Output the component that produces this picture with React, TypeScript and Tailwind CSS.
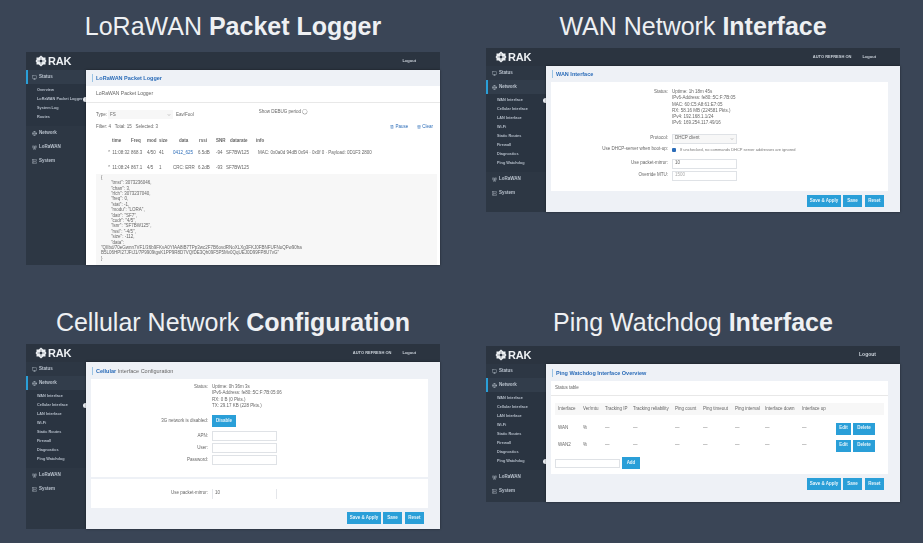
import { Monitor, Globe, RadioTower, Server, Pause, Trash2, ChevronDown } from 'lucide-react';
import type { ReactNode } from 'react';

const statusSubs = ['Overview', 'LoRaWAN Packet Logger', 'System Log', 'Routes'];
const networkSubs = ['WAN Interface', 'Cellular Interface', 'LAN Interface', 'Wi-Fi', 'Static Routes', 'Firewall', 'Diagnostics', 'Ping Watchdog'];

function Logo() {
  return (
    <div className="flex items-center gap-[1px] text-[#eef1f4]">
      <svg width="12" height="12" viewBox="0 0 24 24" fill="currentColor">
        <path d="M12 1l4.500 4h4.500v4.500l2 2.500-2 2.500V19h-4.500L12 23l-4.500-4H3v-4.500L1 12l2-2.500V5h4.500z" />
        <circle cx="12" cy="12" r="3" fill="#2b3440" />
        <path d="M12 5v3M12 16v3M5 12h3M16 12h3" stroke="#2b3440" strokeWidth="1" />
      </svg>
      <span className="text-[11px] font-bold leading-none tracking-[-0.2px]">RAK</span>
    </div>
  );
}

function NavItem({ icon, label, active }: { icon: ReactNode; label: string; active?: boolean }) {
  return (
    <div className={`relative flex h-[14px] items-center gap-[2px] pl-[6px] text-[4.5px] font-bold text-[#b9c2cd] ${active ? 'bg-[#323d4b]' : ''}`}>
      {active && <div className="absolute top-0 left-0 h-full w-[2px] bg-[#2a9fd8]" />}
      {icon}
      <span>{label}</span>
    </div>
  );
}

function Sidebar({ open, active }: { open: 'Status' | 'Network'; active: string }) {
  const subs = open === 'Status' ? statusSubs : networkSubs;
  const list = (
    <div className="flex flex-col bg-[#2a3441] pt-[2px] pb-[4px]">
      {subs.map((s) => (
        <div key={s} className="relative flex h-[9px] items-center whitespace-nowrap pl-[11px] text-[3.800px] font-bold text-[#b4bdc9]">
          {s}
          {s === active && <div className="absolute top-[2px] right-[-2px] size-[5px] rounded-full bg-[#eef1f6]" />}
        </div>
      ))}
    </div>
  );
  return (
    <div className="flex w-[60px] shrink-0 flex-col bg-[#2d3744]">
      <NavItem icon={<Monitor size={5} />} label="Status" active={open === 'Status'} />
      {open === 'Status' && list}
      <NavItem icon={<Globe size={5} />} label="Network" active={open === 'Network'} />
      {open === 'Network' && list}
      <NavItem icon={<RadioTower size={5} />} label="LoRaWAN" />
      <NavItem icon={<Server size={5} />} label="System" />
    </div>
  );
}

function Panel({ open, active, refresh, logoutOnly, children }: { open: 'Status' | 'Network'; active: string; refresh?: boolean; logoutOnly?: boolean; children: ReactNode }) {
  return (
    <div className="flex flex-col blur-[0.5px]">
      <div className="flex h-[18px] items-center justify-between bg-[#2b3440] pr-[24px] pl-[9px]">
        <Logo />
        <div className={`flex gap-[11px] font-bold text-[#c9d0d8] ${logoutOnly ? 'text-[5px]' : 'text-[4px]'}`}>
          {refresh && <span>AUTO REFRESH ON</span>}
          <span>Logout</span>
        </div>
      </div>
      <div className="flex">
        <Sidebar open={open} active={active} />
        <div className="relative min-w-0 flex-1 bg-[#eef1f6] shadow-[0_0_2px_rgba(0,0,0,0.5)]">{children}</div>
      </div>
    </div>
  );
}

function Heading({ children }: { children: ReactNode }) {
  return (
    <div className="flex h-[16px] items-center pl-[1px]">
      <div className="border-l border-[#9cc4e4] pl-[3px] text-[5.500px] font-bold text-[#2b6cb8]">{children}</div>
    </div>
  );
}

function Row({ label, children, className }: { label: string; children: ReactNode; className?: string }) {
  return (
    <div className={`flex items-center gap-[4px] text-[4.500px] text-[#666] ${className ?? ''}`}>
      <div className="w-[117px] shrink-0 text-right">{label}</div>
      {children}
    </div>
  );
}

function Input({ value, gray }: { value?: string; gray?: boolean }) {
  return (
    <div className={`flex h-[10px] w-[65px] items-center border border-[#dfe2e6] bg-white pl-[2px] text-[4.500px] ${gray ? 'text-[#aaa]' : 'text-[#666]'}`}>{value}</div>
  );
}

function Btn({ children, className }: { children: ReactNode; className?: string }) {
  return <div className={`flex h-[12px] items-center justify-center bg-[#2a9fd8] text-[4.500px] font-bold text-[#e6f4fb] ${className ?? ''}`}>{children}</div>;
}

function Actions() {
  return (
    <div className="flex justify-end gap-[2px] pr-[4px]">
      <Btn className="w-[34px]">Save & Apply</Btn>
      <Btn className="w-[19px]">Save</Btn>
      <Btn className="ml-[1px] w-[19px]">Reset</Btn>
    </div>
  );
}

function Lines({ lines }: { lines: string[] }) {
  return (
    <div className="flex flex-col text-[4.500px] leading-[6.300px] text-[#666]">
      {lines.map((l) => (
        <div key={l} className="whitespace-nowrap">{l}</div>
      ))}
    </div>
  );
}

const jsonLines = ['"tmst": 3073236046,', '"chan": 3,', '"rfch": 3073237040,', '"freq": 0,', '"stat": -1,', '"modu": "LORA",', '"datr": "SF7",', '"codr": "4/5",', '"lsnr": "SF7BW125",', '"rssi": "-4/5",', '"size": -112,', '"data":'];

const logWidths = ['w-[24px]', 'w-[16px]', 'w-[12px]', 'w-[14px]', 'w-[25px]', 'w-[18px]', 'w-[10px]', 'w-[32px]'];

function LogRow({ cells, link, className }: { cells: string[]; link?: boolean; className: string }) {
  return (
    <div className={`flex whitespace-nowrap pl-[11px] ${className}`}>
      {cells.map((c, i) => (
        <span key={i} className={`${logWidths[i] ?? ''} ${link && i === 4 ? 'text-[#2b6cb8]' : ''}`}>{c}</span>
      ))}
    </div>
  );
}

function LoggerPanel() {
  return (
    <Panel open="Status" active="LoRaWAN Packet Logger">
      <div className="h-[195px]">
        <div className="pl-[5px]"><Heading>LoRaWAN Packet Logger</Heading></div>
        <div className="flex h-[17px] items-center border-b border-[#e8e8e8] bg-white pl-[10px] text-[5px] text-[#666]">LoRaWAN Packet Logger</div>
        <div className="flex h-[162px] flex-col bg-white pl-[10px] text-[4.500px] text-[#666]">
          <div className="flex items-center pt-[6px]">
            <span className="mr-[1px]">Type:</span>
            <div className="flex h-[9px] w-[65px] items-center justify-between bg-[#f7f7f7] px-[2px]">FS<ChevronDown size={4} /></div>
            <span className="ml-[3px]">Eav/Fool</span>
            <span className="mb-[5px] ml-[65px]">Show DEBUG period ◯</span>
          </div>
          <div className="flex items-center justify-between pt-[3px] pr-[7px]">
            <span>Filter: 4 &nbsp; Total: 15 &nbsp; Selected: 3</span>
            <div className="flex gap-[9px] text-[#2b6cb8]">
              <span className="flex items-center gap-[1px]"><Pause size={4} />Pause</span>
              <span className="flex items-center gap-[1px]"><Trash2 size={4} />Clear</span>
            </div>
          </div>
          <div className="flex pt-[7px] pl-[16px] font-bold">
            <span className="w-[19px]">time</span><span className="w-[16px]">Freq</span><span className="w-[12px]">mod</span><span className="w-[20px]">size</span><span className="w-[20px]">data</span><span className="w-[17px]">rssi</span><span className="w-[14px]">SNR</span><span className="w-[26px]">datarate</span><span>info</span>
          </div>
          <LogRow link className="pt-[6px]" cells={['⌃ 11:08:32', '868.3', '4/50', '41', '0412_625', '6.5dB', '-94', 'SF7BW125', 'MAC: 0x0a0d 94dB 0x94 · 0x0f 0  ·  Payload: 0D1F3 2800']} />
          <LogRow className="pt-[8px]" cells={['⌃ 11:08:24', '867.1', '4/5', '1', 'CRC: ERR', '6.2dB', '-93', 'SF7BW125']} />
          <div className="mt-[2px] mr-[3px] flex-1 bg-[#f7f7f7] pt-[1px] pl-[5px] leading-[5.400px]">
            <div>{'{'}</div>
            <div className="pl-[10px]">
              {jsonLines.map((l) => <div key={l}>{l}</div>)}
            </div>
            <div className="whitespace-nowrap">"QIIbd/70eGwnn7VF1/36b9FKvA0YfAA8iB7TPp3wc2F7B6ovdRNoXLXg3FKJ0FBNFUFNoQFw90ha</div>
            <div className="whitespace-nowrap">B5L06HPI27JFtJ1/7P9909tgsK1PP9R8D7VQfDE3Qh09F5P5Mv0QqUEJ0D99FP8U7vG"</div>
            <div>{'}'}</div>
          </div>
        </div>
      </div>
    </Panel>
  );
}

function WanPanel() {
  return (
    <Panel open="Network" active="WAN Interface" refresh>
      <div className="pr-[12px] pb-[5px] pl-[5px]">
        <Heading>WAN Interface</Heading>
        <div className="h-[109px] bg-white pt-[7px]">
          <Row label="Status:" className="items-start">
            <Lines lines={['Uptime: 1h 18m 45s', 'IPv6-Address: fe80::5C:F:7B:05', 'MAC: 60:C5:A8:61:E7:05', 'RX: 58.16 MB (224581 Pkts.)', 'IPv4: 192.168.1.1/24', 'IPv6: 169.254.117.49/16']} />
          </Row>
          <Row label="Protocol:" className="mt-[7px]">
            <div className="flex h-[10px] w-[65px] items-center justify-between border border-[#dfe2e6] bg-[#f7f7f7] px-[2px]">DHCP client<ChevronDown size={4} /></div>
          </Row>
          <Row label="Use DHCP-server when boot-up:" className="mt-[3px] h-[6px]">
            <div className="size-[4px] rounded-[1px] bg-[#2b6cb8]" />
            <span className="text-[4px] text-[#777]">If unchecked, no commands DHCP server addresses are ignored</span>
          </Row>
          <Row label="Use packet-mirror:" className="mt-[6px]"><Input value="10" /></Row>
          <Row label="Override MTU:" className="mt-[2px]"><Input value="1500" gray /></Row>
        </div>
        <div className="mt-[4px]"><Actions /></div>
      </div>
    </Panel>
  );
}

function CellularPanel() {
  return (
    <Panel open="Network" active="Cellular Interface" refresh>
      <div className="pr-[12px] pb-[5px] pl-[5px]">
        <div className="h-[1px]" />
        <Heading><span>Cellular</span> <span className="font-normal text-[#666]">Interface Configuration</span></Heading>
        <div className="h-[98px] bg-white pt-[5px]">
          <Row label="Status:" className="items-start">
            <Lines lines={['Uptime: 0h 36m 3s', 'IPv6-Address: fe80::5C:F:7B:05:06', 'RX: 0 B (0 Pkts.)', 'TX: 29.17 KB (228 Pkts.)']} />
          </Row>
          <Row label="3G network is disabled:" className="mt-[6px]">
            <Btn className="h-[8px] w-[24px]">Disable</Btn>
          </Row>
          <Row label="APN:" className="mt-[4px]"><Input /></Row>
          <Row label="User:" className="mt-[2px]"><Input /></Row>
          <Row label="Password:" className="mt-[2px]"><Input /></Row>
        </div>
        <div className="mt-[2px] flex h-[29px] items-center bg-white">
          <Row label="Use packet-mirror:">
            <div className="flex h-[10px] w-[65px] items-center border-x border-[#e4e6ea] pl-[2px]">10</div>
          </Row>
        </div>
        <div className="mt-[4px]"><Actions /></div>
      </div>
    </Panel>
  );
}

const pingCols: [string, string][] = [
  ['Interface', 'w-[25px]'], ['Ver/mtu', 'w-[22px]'], ['Tracking IP', 'w-[28px]'], ['Tracking reliability', 'w-[42px]'], ['Ping count', 'w-[28px]'], ['Ping timeout', 'w-[32px]'], ['Ping interval', 'w-[30px]'], ['Interface down', 'w-[37px]'], ['Interface up', 'w-[30px]'],
];

function PingRow({ name }: { name: string }) {
  const widths = ['w-[28px]', 'w-[42px]', 'w-[28px]', 'w-[32px]', 'w-[30px]', 'w-[37px]', 'w-[30px]'];
  return (
    <div className="flex h-[17px] items-center pl-[3px] text-[4.500px] text-[#666]">
      <span className="w-[25px]">{name}</span>
      <span className="w-[22px]">%</span>
      {widths.map((w, i) => <span key={i} className={w}>—</span>)}
      <div className="ml-auto flex gap-[2px] pr-[9px]">
        <Btn className="h-[8px] w-[15px]">Edit</Btn>
        <Btn className="h-[8px] w-[22px]">Delete</Btn>
      </div>
    </div>
  );
}

function PingPanel() {
  return (
    <Panel open="Network" active="Ping Watchdog" logoutOnly>
      <div className="pr-[12px] pb-[12px] pl-[5px]">
        <div className="h-[1px]" />
        <Heading>Ping Watchdog Interface Overview</Heading>
        <div className="h-[93px] bg-white">
          <div className="flex h-[15px] items-center border-b border-[#e8e8e8] pl-[4px] text-[4.500px] text-[#666]">Status table</div>
          <div className="mx-[4px] mt-[7px]">
            <div className="flex h-[12px] items-center bg-[#f7f7f7] pl-[3px] text-[4.500px] text-[#666]">
              {pingCols.map(([c, w]) => <span key={c} className={`${w} whitespace-nowrap`}>{c}</span>)}
            </div>
            <div className="mt-[5px]"><PingRow name="WAN" /><PingRow name="WAN2" /></div>
            <div className="mt-[3px] flex items-center gap-[2px]">
              <div className="h-[9px] w-[65px] border border-[#dfe2e6]" />
              <Btn className="h-[7px] w-[18px]">Add</Btn>
            </div>
          </div>
        </div>
        <div className="mt-[4px]"><Actions /></div>
      </div>
    </Panel>
  );
}

function Title({ light, bold, className }: { light: string; bold: string; className: string }) {
  return (
    <div className={`flex items-center justify-center whitespace-nowrap text-[25px] text-[#eef0f3] ${className}`}>
      <span>{light}&nbsp;</span><span className="font-bold">{bold}</span>
    </div>
  );
}

export default function App() {
  return (
    <div className="h-[543px] w-[923px] overflow-hidden bg-[#3a4556] pl-[26px] font-['Liberation_Sans',sans-serif]">
      <div className="grid grid-cols-[414px_414px] grid-rows-[293px_250px] gap-x-[46px]">
        <div>
          <Title light="LoRaWAN" bold="Packet Logger" className="h-[52px] pt-[2px]" />
          <LoggerPanel />
        </div>
        <div>
          <Title light="WAN Network" bold="Interface" className="h-[48px] pt-[6px]" />
          <WanPanel />
        </div>
        <div>
          <Title light="Cellular Network" bold="Configuration" className="h-[51px] pt-[9px]" />
          <CellularPanel />
        </div>
        <div>
          <Title light="Ping Watchdog" bold="Interface" className="h-[53px] pt-[7px]" />
          <PingPanel />
        </div>
      </div>
    </div>
  );
}
